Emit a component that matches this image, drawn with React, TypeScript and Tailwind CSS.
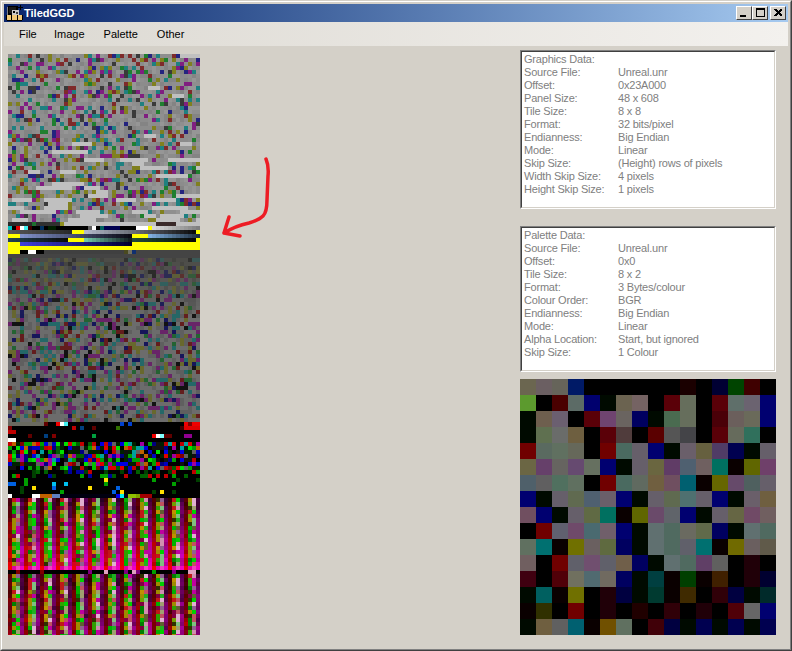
import { useMemo } from 'react';

const font = { fontFamily: '"Liberation Sans", Arial, sans-serif' };

const graphicsRows = [
  ['Graphics Data:', ''],
  ['Source File:', 'Unreal.unr'],
  ['Offset:', '0x23A000'],
  ['Panel Size:', '48 x 608'],
  ['Tile Size:', '8 x 8'],
  ['Format:', '32 bits/pixel'],
  ['Endianness:', 'Big Endian'],
  ['Mode:', 'Linear'],
  ['Skip Size:', '(Height) rows of pixels'],
  ['Width Skip Size:', '4 pixels'],
  ['Height Skip Size:', '1 pixels'],
];

const paletteRows = [
  ['Palette Data:', ''],
  ['Source File:', 'Unreal.unr'],
  ['Offset:', '0x0'],
  ['Tile Size:', '8 x 2'],
  ['Format:', '3 Bytes/colour'],
  ['Colour Order:', 'BGR'],
  ['Endianness:', 'Big Endian'],
  ['Mode:', 'Linear'],
  ['Alpha Location:', 'Start, but ignored'],
  ['Skip Size:', '1 Colour'],
];

const swatches = [
  '6b6650 6b5f62 66645a 001a66 000000 000000 000000 000000 000000 000000 1a0000 000000 000033 004400 3f0000 000000',
  '5c9a2e 000000 4a0000 5c6b66 00006e 000a00 6b6350 756363 000000 5a0008 666e5c 000000 5a0008 5f6f6a 6b6370 000070',
  '000a00 6e5f4e 6b5f70 000000 5a0008 6f4470 6a6460 000060 000a00 4a6b50 666e5c 000000 4a0008 6b5f5c 6a6a5a 000070',
  '000a00 5f7050 6a6c6a 6e5f40 000000 5a0008 503c3c 000000 5a0000 555555 444448 000000 5a0008 666b5c 30705c 000000',
  '700000 5a6a60 607060 66685a 000000 700000 4a6a60 665f6a 000070 000a00 6a5f6a 66603f 503c66 000050 000a00 665f6a',
  '6b6644 66406a 666460 664a70 667060 000070 000a00 665f6a 6a6640 603c66 4f6070 6f6060 007060 0a0000 606600 6f406a',
  '4f606a 605f60 50705f 607060 000000 700000 4a6a60 606a60 705f40 6f4f60 006070 0a0000 666600 664a6a 4f605f 665f6a',
  '000070 000a00 665f6a 606a50 4f6070 6a5f6a 000070 000a00 665f6a 5f6a50 4f7070 665f6a 000070 000a00 6a5f6a 6f5f40',
  '704f60 000070 000a00 665f6a 606a44 007060 0a0000 606600 6a4a6a 60646a 000070 000a00 665f6a 666644 704a66 705f60',
  '000000 700000 60606f 6f4a6a 4a6a70 705f6a 000070 000a00 607070 506a60 6a6a60 606a4a 000060 000a00 607070 506a60',
  '607060 007070 0a0000 707000 6a6060 5f6a40 000060 000a00 607070 506a60 60606a 007070 0a0000 706a00 6a5f5f 605a4a',
  '705f60 000000 700000 60606a 704f6f 60606a 705f4a 000060 000a00 607070 506a60 603f66 60605f 000000 200008 000000',
  '3f0010 000000 500008 70705f 506a70 706a60 000060 000a00 003f40 0a0000 003f00 0a0000 402000 000000 200008 000030',
  '000a00 006060 0a0000 707000 000000 200008 000040 000a00 003a30 0a0000 3f2a00 000000 300008 000040 000a00 002a2a',
  '0a0000 303000 000000 700000 000000 200008 000000 200000 000000 300008 000000 200008 000000 500008 666666 000070',
  '000a00 6f5f40 606060 006070 0a0000 705000 607060 000000 400008 000040 000a00 000050 000a00 000050 000a00 000050',
].map((row) => row.split(' '));

function makeRandom(seed: number) {
  return () => {
    seed = (seed + 0x6d2b79f5) | 0;
    let t = Math.imul(seed ^ (seed >>> 15), 1 | seed);
    t = (t + Math.imul(t ^ (t >>> 7), 61 | t)) ^ t;
    return ((t ^ (t >>> 14)) >>> 0) / 4294967296;
  };
}

function hexToRgb(hex: string) {
  return [0, 2, 4].map((i) => parseInt(hex.slice(i, i + 2), 16));
}

function toHex(rgb: number[]) {
  return rgb.map((v) => Math.max(0, Math.min(255, Math.round(v))).toString(16).padStart(2, '0')).join('');
}

function mix(a: string, b: string, t: number) {
  const ca = hexToRgb(a);
  const cb = hexToRgb(b);
  return toHex(ca.map((v, i) => v + (cb[i] - v) * t));
}

// [from, to, colour, optional end colour of a gradient]
type Seg = [number, number, string, string?];

const handRows: Record<number, Seg[]> = {
  222: [[0, 5, '2a2a2a'], [6, 6, '1f6f2f'], [7, 12, '303030'], [13, 13, '8f8f1f'], [14, 36, 'c0c0c0'], [37, 41, '3a2a2a'], [42, 47, 'c0c0c0']],
  226: [[0, 0, '00c0c0'], [1, 1, '000000'], [2, 2, 'e00000'], [3, 3, 'ffffff'], [4, 4, '40f0f0'], [5, 5, '400000'], [6, 7, '000000'], [8, 8, '003060'], [9, 9, '000000'], [10, 11, '002000'], [12, 19, '000000'], [20, 20, '606060'], [21, 21, 'ffffff'], [22, 22, '000000'], [23, 23, '006060'], [24, 27, '000050'], [28, 31, '000000'], [32, 34, 'ffffff'], [35, 35, 'ffff00'], [36, 47, 'd8d8d8', '808080']],
  230: [[0, 15, '555555', '2a2a2a'], [16, 18, 'ffff00'], [19, 46, 'b0b8c8', '0c0c0c'], [47, 47, 'ffff00']],
  234: [[0, 2, 'ffff00'], [3, 30, '8090c8', '0a0a14'], [31, 34, 'ffff00'], [35, 47, '80b0e0', '203040']],
  238: [[0, 14, '204050', '0c0c0c'], [15, 18, 'ffff00'], [19, 30, '70c8a8', '101c20'], [31, 46, '204838', '080808'], [47, 47, 'ffff00']],
  242: [[0, 2, 'ffff00'], [3, 30, '4040d8', '000030'], [31, 47, 'ffff00']],
  246: [[0, 47, 'ffff00']],
  250: [[0, 2, 'ffff00'], [3, 4, '000000'], [5, 6, 'ffffff'], [7, 8, '000000'], [9, 28, '404040'], [29, 29, '4a4a20'], [30, 30, '707060'], [31, 31, '103070'], [32, 47, '444444']],
  254: [[0, 47, '444444']],
  422: [[0, 8, '6a6a60'], [9, 9, '600000'], [10, 11, '000000'], [12, 12, 'f00000'], [13, 13, 'ffffff'], [14, 14, '40f0f0'], [15, 27, '000000'], [28, 28, '0040d0'], [29, 29, '000000'], [30, 30, '0040d0'], [31, 43, '000000'], [44, 44, 'f00000'], [45, 45, '800000'], [46, 47, 'f00000']],
  426: [[0, 0, '800000'], [1, 15, '000000'], [16, 16, 'c00000'], [17, 17, '000000'], [18, 18, '004080'], [19, 20, '000000'], [21, 21, '600000'], [22, 26, '000000'], [27, 27, '307000'], [28, 42, '000000'], [43, 43, '400000'], [44, 47, 'e00000']],
  430: [[0, 1, 'c00000'], [2, 47, '000000']],
  434: [[0, 4, '000000'], [5, 5, '600000'], [6, 8, '000000'], [9, 9, '004080'], [10, 10, '000000'], [11, 11, '800000'], [12, 20, '000000'], [21, 21, '00a040'], [22, 35, '000000'], [36, 36, 'f00000'], [37, 37, 'ffffff'], [38, 38, '80ffff'], [39, 40, '600000'], [41, 43, '000000'], [44, 45, '900090'], [46, 47, '000000']],
  438: [[0, 1, 'ffffff'], [2, 47, '000000']],
  494: [[0, 0, 'ffffff'], [1, 5, '000000'], [6, 7, 'ffffff'], [8, 10, 'c06000'], [11, 12, '6080c0'], [13, 26, '000010'], [27, 27, '0000f0'], [28, 28, '00f0f0'], [29, 29, '000020'], [30, 31, '90c000'], [32, 32, '80a000'], [33, 35, 'a00000'], [36, 47, '000000']],
};

const noiseColours = ['1f8080', '801f80', '80801f', '7f2a2a', '24247f', '1f7f2f', '3a3a3a', '1f8080', '801f80', '80801f'];
const vivid = ['00c000', '0000c0', 'c00000', '006000', '000080', '800000', '00a000', '0000e0', '00e000', 'e00000', '606060', '00a0a0', 'a000a0', 'c06000'];

function buildPanel() {
  const rand = makeRandom(48608);
  const pick = (list: string[]) => list[Math.floor(rand() * list.length)];
  const cells: { x: number; y: number; w: number; fill: string }[] = [];

  for (let y = 54; y < 635; y += 4) {
    const hand = handRows[y];
    if (hand) {
      for (const [from, to, colour, end] of hand) {
        if (end) {
          for (let c = from; c <= to; c++) {
            cells.push({ x: c, y, w: 1, fill: mix(colour, end, (c - from) / Math.max(1, to - from)) });
          }
        } else {
          cells.push({ x: from, y, w: to - from + 1, fill: colour });
        }
      }
      continue;
    }

    let c = 0;
    while (c < 48) {
      let fill = '000000';
      let w = 1;
      if (y < 222) {
        // grey noise, light runs further down
        const runChance = y < 118 ? 0.004 : y < 150 ? 0.01 : y < 206 ? 0.035 : 0.14;
        if (rand() < runChance) {
          fill = 'c0c0c0';
          w = 3 + Math.floor(rand() * (y < 150 ? 3 : 7));
        } else if (rand() < 0.62) {
          fill = pick(['8c8c8c', '969696', '848484', '8f8f8f']);
        } else {
          fill = pick(noiseColours);
        }
      } else if (y < 422) {
        const t = Math.min(1, (y - 258) / 60);
        if (rand() < 0.55) {
          fill = mix('4c4c48', '6c6c6c', t);
          if (rand() < 0.3) fill = mix(fill, '000000', 0.12);
        } else {
          const muted = pick(['1f6b6b', '6b1f6b', '6b6b2a', '661818', '10105c', '0c0c0c', '1f662f', '1f6b6b', '6b1f6b', '6b6b2a']);
          fill = mix(muted, '4c4c48', 0.6 - 0.5 * t);
        }
      } else if (y < 470) {
        fill = rand() < (y < 442 ? 0.1 : 0.62) ? pick(vivid) : pick(['000000', '101010', '002000']);
      } else if (y < 494) {
        const chance = y < 478 ? 0.4 : 0.12;
        fill = rand() < chance ? pick(y < 478 ? ['006000', '004000', '0000a0', 'c00000', '00a000'] : ['00a000', '0060e0', 'ffe000', '00c0f0', '004000']) : '000000';
      } else if (y >= 566 && y < 570) {
        fill = c % 4 === 0 ? 'f00000' : c % 4 === 3 ? 'f000c0' : c % 4 === 1 ? 'e000a0' : 'f040c0';
      } else if (y >= 570 && y < 574) {
        fill = rand() < 0.3 ? pick(['c08000', 'e0a0c0', '800000', '800080', '00a000']) : '000000';
      } else {
        const block = y < 566;
        const t = block ? 0.15 + ((y - 498) / 68) * 0.85 : 0.3 + ((y - 574) / 61) * 0.5;
        if (c % 4 === 1) {
          fill = pick(['a08c00', '30a000', 'c01818', '70a000', 'a08c00', '00b000', '303000', 'c09000', '008000', '800040']);
        } else if (c % 4 === 2) {
          fill = pick(['d090b0', '80c080', 'e0b0d0', '20b020', 'c05060', 'a0a070', '606030', '906090', '00d000', 'c000a0']);
        } else if (c % 4 === 3) {
          fill = mix(pick(['200020', '300018', '100010', '400040']), pick(['f000c0', 'c000a0', 'e000d0']), block ? t : t * (0.4 + rand() * 0.6));
        } else {
          fill = mix(pick(['200000', '300010', '180000', '400000']), pick(['f00000', 'c00000', 'e00020']), block ? t : t * (0.4 + rand() * 0.6));
        }
      }
      w = Math.min(w, 48 - c);
      cells.push({ x: c, y, w, fill });
      c += w;
    }
  }
  return cells;
}

function TiledPanel() {
  const cells = useMemo(buildPanel, []);
  return (
    <svg width="192" height="581" viewBox="0 54 192 581" shapeRendering="crispEdges" className="mt-1 shrink-0 block">
      {cells.map((cell, i) => (
        <rect key={i} x={cell.x * 4} y={cell.y} width={cell.w * 4} height="4" fill={`#${cell.fill}`} />
      ))}
    </svg>
  );
}

function AppIcon() {
  return (
    <svg width="18" height="16" viewBox="0 0 18 16" shapeRendering="crispEdges" className="shrink-0">
      <rect x="2" y="1" width="10" height="9" fill="#000" />
      <rect x="1" y="2" width="1" height="8" fill="#808080" />
      <rect x="3" y="2" width="7" height="6" fill="#1a1a1a" />
      <rect x="14" y="0" width="1" height="5" fill="#000" />
      <rect x="12" y="2" width="5" height="1" fill="#000" />
      <rect x="6" y="5" width="7" height="5" fill="#c8c8c8" />
      <rect x="7" y="6" width="2" height="2" fill="#000" />
      <rect x="10" y="7" width="2" height="2" fill="#404040" />
      <rect x="1" y="10" width="15" height="5" fill="#f0c878" />
      <rect x="1" y="15" width="15" height="1" fill="#000" />
      <rect x="0" y="10" width="1" height="5" fill="#000" />
      <rect x="16" y="10" width="1" height="5" fill="#000" />
      <rect x="5" y="10" width="1" height="5" fill="#000" />
      <rect x="11" y="10" width="1" height="5" fill="#000" />
    </svg>
  );
}

function CaptionButton({ kind, className }: { kind: 'min' | 'max' | 'close'; className?: string }) {
  return (
    <div className={`w-4 h-[14px] bg-[#d4d0c8] border-t border-l border-white border-r border-b border-r-[#404040] border-b-[#404040] ${className ?? ''}`}>
      <svg width="14" height="12" viewBox="0 0 14 12" shapeRendering="crispEdges" className="block">
        {kind === 'min' && <rect x="3" y="8" width="6" height="2" fill="#000" />}
        {kind === 'max' && <path d="M3 1h9v9H3z M4 3v6h7V3z" fill="#000" fillRule="evenodd" />}
        {kind === 'close' && (
          <path d="M3 2h2l2 2 2-2h2v1L8.500 5.500 11 8v1H9L7 7 5 9H3V8l2.500-2.500L3 3z" fill="#000" />
        )}
      </svg>
    </div>
  );
}

function InfoBox({ rows, className }: { rows: string[][]; className: string }) {
  return (
    <div className={`border border-t-[#808080] border-l-[#808080] border-r-white border-b-white ${className}`}>
      <div className="h-full bg-white border border-t-[#404040] border-l-[#404040] border-r-[#d4d0c8] border-b-[#d4d0c8] pt-px pl-[2px]">
        {rows.map(([label, value]) => (
          <div key={label} className="grid grid-cols-[94px_1fr] h-[13px] text-[11px] leading-[13px] tracking-[-0.2px] text-[#808080]">
            <span className="whitespace-nowrap">{label}</span>
            <span className="whitespace-nowrap">{value}</span>
          </div>
        ))}
      </div>
    </div>
  );
}

export default function App() {
  return (
    <div style={font} className="w-[792px] h-[651px] overflow-hidden border border-t-[#d4d0c8] border-l-[#d4d0c8] border-r-[#404040] border-b-[#404040]">
      <div className="h-full border border-t-white border-l-white border-r-[#808080] border-b-[#808080] bg-[#d4d0c8] p-[2px] flex flex-col">
        <div className="h-[18px] shrink-0 flex items-center pl-[2px] pr-[2px] bg-linear-to-r from-[#0a246a] to-[#a6caf0]">
          <AppIcon />
          <span className="ml-0 text-[11px] font-bold leading-none text-white">TiledGGD</span>
          <div className="ml-auto flex">
            <CaptionButton kind="min" />
            <CaptionButton kind="max" />
            <CaptionButton kind="close" className="ml-[2px]" />
          </div>
        </div>

        <div className="h-6 shrink-0 flex items-center pl-[15px] gap-[19px] text-[11px] text-black bg-linear-to-r from-[#dcd9d2] to-[#f3f1ee]">
          <span className="w-4">File</span>
          <span>Image</span>
          <span>Palette</span>
          <span>Other</span>
        </div>

        <div className="relative flex-1 flex justify-between pl-1 pr-3 pt-1">
          <TiledPanel />

          {/* red annotation arrow */}
          <svg width="60" height="90" viewBox="0 0 60 90" className="absolute left-[213px] top-[110px]">
            <path
              d="M49 3 Q52 10 51 20 L50 44 Q50 56 46 60 Q42 64 32 67 Q18 70 7 77 M7 77 L12 61 M7 77 L23 80"
              fill="none"
              stroke="#ed1c24"
              strokeWidth="3.5"
              strokeLinecap="round"
            />
          </svg>

          <div className="w-64 shrink-0 flex flex-col">
            <InfoBox rows={graphicsRows} className="h-[159px]" />
            <InfoBox rows={paletteRows} className="h-[146px] mt-[17px]" />
            <svg width="256" height="256" viewBox="0 0 16 16" shapeRendering="crispEdges" className="mt-[7px] block">
              {swatches.map((row, y) =>
                row.map((hex, x) => <rect key={`${x}-${y}`} x={x} y={y} width="1" height="1" fill={`#${hex}`} />),
              )}
            </svg>
          </div>
        </div>
      </div>
    </div>
  );
}
